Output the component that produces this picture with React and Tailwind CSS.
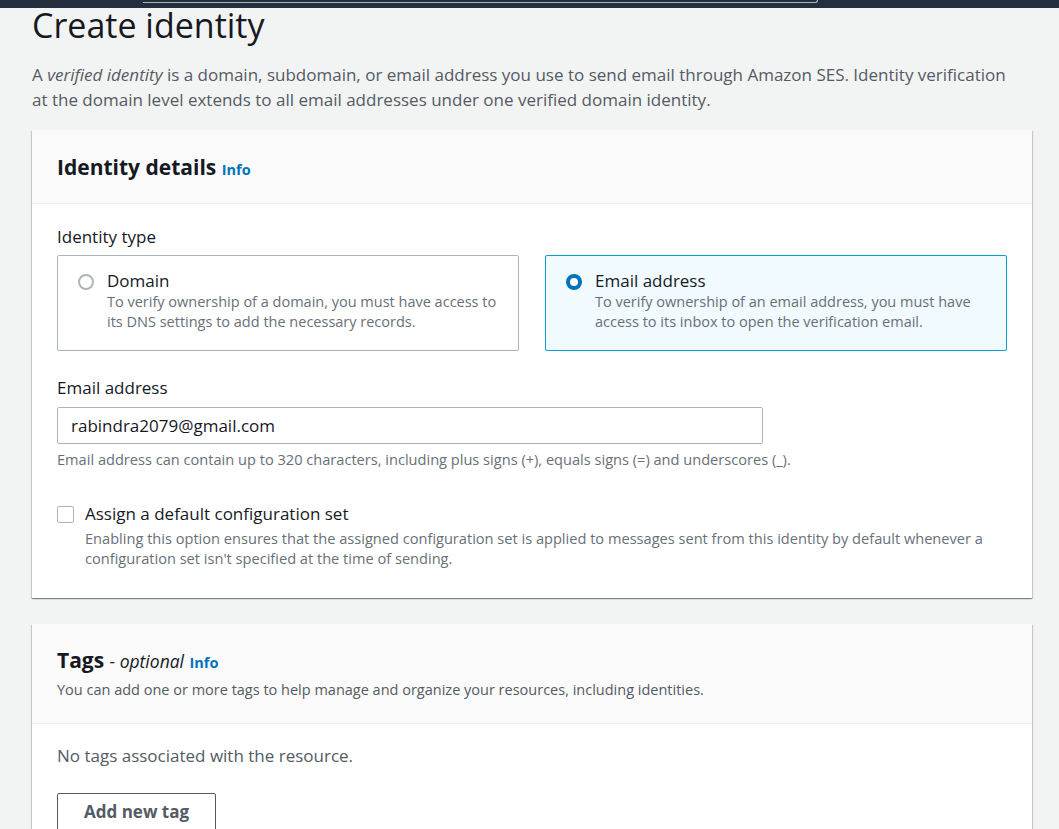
import React, { useState } from "react";

export default function App() {
  const [identityType, setIdentityType] = useState("email");
  const [email, setEmail] = useState("rabindra2079@gmail.com");
  const [assignConfig, setAssignConfig] = useState(false);

  return (
    <div
      className="min-h-[829px] bg-[#f2f3f3] text-[#16191f] overflow-hidden"
      style={{ fontFamily: '"Open Sans", "Noto Sans", Arial, sans-serif' }}
    >
      {/* top bar */}
      <div className="h-2 bg-[#232f3e] relative">
        <div className="absolute left-[143px] w-[675px] top-0 h-[3px] border-b border-r border-[#aab7b8] rounded-br-sm" />
      </div>

      <div className="pl-8 pr-[27px]">
        <h1 className="text-[34px] leading-[34px] font-normal">Create identity</h1>
        <p className="mt-[20px] max-w-[985px] text-[17px] leading-[25px] text-[#545b64]">
          A <i>verified identity</i> is a domain, subdomain, or email address you use to send email through Amazon SES. Identity verification at the domain level extends to all email addresses under one verified domain identity.
        </p>

        {/* Identity details */}
        <section className="mt-[18px] bg-white shadow-[0_1px_1px_0_rgba(0,28,36,0.3),1px_1px_1px_0_rgba(0,28,36,0.15),-1px_1px_1px_0_rgba(0,28,36,0.15)]">
          <div className="bg-[#fafafa] border-b border-[#eaeded] h-[74px] px-[25px] flex items-center">
            <h2 className="text-[21px] font-bold leading-[26px] mt-[4px]">
              Identity details{" "}
              <span className="text-[14.5px] font-bold text-[#0073bb]">Info</span>
            </h2>
          </div>

          <div className="px-[25px] pt-[22px] pb-[30px]">
            <div className="text-[17px] leading-[22px]">Identity type</div>
            <div className="mt-[7px] grid grid-cols-2 gap-[26px]">
              <RadioCard
                checked={identityType === "domain"}
                onClick={() => setIdentityType("domain")}
                title="Domain"
                desc="To verify ownership of a domain, you must have access to its DNS settings to add the necessary records."
              />
              <RadioCard
                checked={identityType === "email"}
                onClick={() => setIdentityType("email")}
                title="Email address"
                desc="To verify ownership of an email address, you must have access to its inbox to open the verification email."
              />
            </div>

            <div className="mt-[26px] text-[17px] leading-[22px]">Email address</div>
            <input
              className="mt-[8px] w-[706px] h-[37px] border border-[#aab7b8] rounded-[2px] px-[13px] text-[17px] text-[#16191f] outline-none"
              value={email}
              onChange={(e) => setEmail(e.target.value)}
            />
            <div className="mt-[6px] text-[14.6px] leading-[18px] text-[#687078]">
              Email address can contain up to 320 characters, including plus signs (+), equals signs (=) and underscores (_).
            </div>

            <label className="mt-[35px] flex items-start gap-[11px] cursor-pointer">
              <span
                onClick={() => setAssignConfig(!assignConfig)}
                className={
                  "mt-[3px] w-[17px] h-[17px] rounded-[2px] border shrink-0 " +
                  (assignConfig ? "bg-[#0073bb] border-[#0073bb]" : "bg-white border-[#aab7b8]")
                }
              />
              <span>
                <span className="block text-[17px] leading-[22px]">Assign a default configuration set</span>
                <span className="block mt-[3px] text-[14.6px] leading-[20px] text-[#687078]">
                  Enabling this option ensures that the assigned configuration set is applied to messages sent from this identity by default whenever a configuration set isn't specified at the time of sending.
                </span>
              </span>
            </label>
          </div>
        </section>

        {/* Tags */}
        <section className="mt-[26px] bg-white shadow-[0_1px_1px_0_rgba(0,28,36,0.3),1px_1px_1px_0_rgba(0,28,36,0.15),-1px_1px_1px_0_rgba(0,28,36,0.15)]">
          <div className="bg-[#fafafa] border-b border-[#eaeded] h-[100px] px-[25px] pt-[23px]">
            <h2 className="text-[21px] font-bold leading-[26px]">
              Tags <span className="text-[17.5px] font-normal italic">- optional</span>{" "}
              <span className="text-[14.5px] font-bold text-[#0073bb]">Info</span>
            </h2>
            <div className="mt-[4px] text-[14.5px] leading-[20px] text-[#545b64]">
              You can add one or more tags to help manage and organize your resources, including identities.
            </div>
          </div>
          <div className="px-[25px] pt-[21px] pb-[20px]">
            <div className="text-[17px] leading-[22px] text-[#545b64]">No tags associated with the resource.</div>
            <button className="mt-[26px] h-[38px] px-[26px] border border-[#545b64] rounded-[2px] bg-white text-[17px] font-bold text-[#545b64]">
              Add new tag
            </button>
          </div>
        </section>
      </div>
    </div>
  );
}

function RadioCard({ checked, onClick, title, desc }) {
  return (
    <div
      onClick={onClick}
      className={
        "h-[96px] rounded-[2px] border px-[20px] pt-[14px] flex gap-[13px] cursor-pointer " +
        (checked ? "border-[#00a1c9] bg-[#f1faff]" : "border-[#aab7b8] bg-white")
      }
    >
      <span
        className={
          "mt-[4px] w-[16px] h-[16px] rounded-full shrink-0 " +
          (checked ? "border-[4px] border-[#0073bb] bg-white" : "border-2 border-[#aab7b8] bg-white")
        }
      />
      <div>
        <div className="text-[17px] leading-[22px]">{title}</div>
        <div className="text-[14.5px] leading-[20px] text-[#687078]">{desc}</div>
      </div>
    </div>
  );
}
